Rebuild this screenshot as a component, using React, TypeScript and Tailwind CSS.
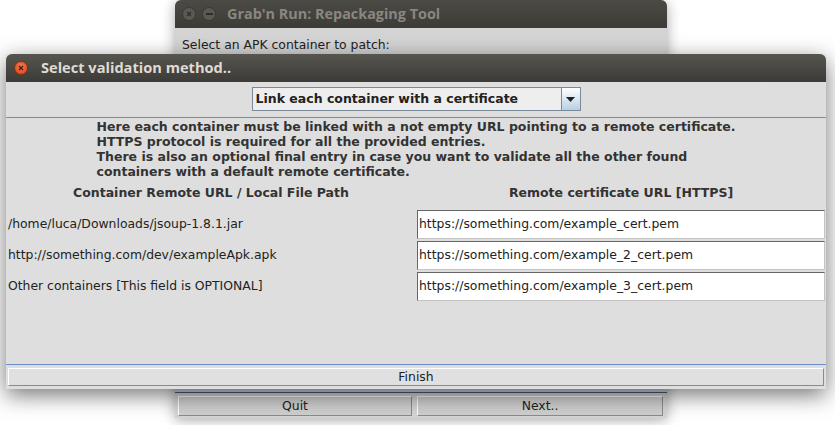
const FONT = "font-['DejaVu_Sans',sans-serif]";
const TITLE_FONT = "font-['Open_Sans','DejaVu_Sans',sans-serif]";

const ROWS = [
  { path: "/home/luca/Downloads/jsoup-1.8.1.jar", cert: "https://something.com/example_cert.pem" },
  { path: "http://something.com/dev/exampleApk.apk", cert: "https://something.com/example_2_cert.pem" },
  { path: "Other containers [This field is OPTIONAL]", cert: "https://something.com/example_3_cert.pem" },
];

function WinButton({ kind, active }: { kind: "close" | "min"; active?: boolean }) {
  const bg = active
    ? "bg-[radial-gradient(circle_at_50%_35%,#f47a52,#d8421a)] border-[#8e2e10]"
    : "bg-[#5a5954] border-[#3a3935]";
  return (
    <div className={`flex h-[14px] w-[14px] items-center justify-center rounded-full border ${bg}`}>
      {kind === "close" ? (
        <svg width="6" height="6" viewBox="0 0 6 6">
          <path d="M1 1L5 5M5 1L1 5" stroke={active ? "#4a1a08" : "#2e2d2a"} strokeWidth="1.2" />
        </svg>
      ) : (
        <div className="h-[2px] w-[7px] bg-[#2e2d2a]" />
      )}
    </div>
  );
}

function MetalButton({ label, className = "" }: { label: string; className?: string }) {
  return (
    <div
      className={`flex items-center justify-center border border-t-white border-l-white border-b-[#8a8a8a] border-r-[#8a8a8a] text-[12.4px] text-[#222] ${className}`}
    >
      {label}
    </div>
  );
}

export default function App() {
  return (
    <div className={`relative h-[425px] w-[835px] overflow-hidden bg-white ${FONT}`}>
      {/* back window */}
      <div className="absolute left-[175px] top-0 flex h-[418px] w-[492px] flex-col rounded-t-[6px] bg-[#d4d4d4] shadow-[0_2px_14px_rgba(0,0,0,0.35)]">
        <div className="flex h-[28px] shrink-0 items-center gap-[6px] rounded-t-[6px] bg-gradient-to-b from-[#4c4a45] to-[#3c3b37] pl-[7px]">
          <WinButton kind="close" />
          <WinButton kind="min" />
          <span className={`ml-[5px] text-[14.4px] font-bold text-[#8a8780] ${TITLE_FONT}`}>
            Grab'n Run: Repackaging Tool
          </span>
        </div>
        <div className="px-[7px] pt-[8px] text-[12.4px] text-[#222]">Select an APK container to patch:</div>
        <div className="flex-1" />
        <div className="h-px bg-[#4d5a80]" />
        <div className="flex gap-[5px] px-[3px] pb-[2px] pt-[3px]">
          <MetalButton label="Quit" className="h-[20px] w-[234px] bg-[#cfcfcf]" />
          <MetalButton label="Next.." className="h-[20px] w-[246px] bg-[#cfcfcf]" />
        </div>
      </div>

      {/* front dialog */}
      <div className="absolute left-[6px] top-[54px] flex h-[335px] w-[820px] flex-col rounded-t-[6px] bg-[#dedede] shadow-[0_6px_22px_rgba(0,0,0,0.55)]">
        <div className="flex h-[28px] shrink-0 items-center rounded-t-[6px] bg-gradient-to-b from-[#57554f] to-[#3c3b37] pl-[8px]">
          <WinButton kind="close" active />
          <span className={`ml-[13px] text-[14.6px] font-bold text-[#dfdbd2] ${TITLE_FONT}`}>
            Select validation method..
          </span>
        </div>

        <div className="flex justify-center pt-[5px]">
          <div className="flex h-[24px] w-[329px] border border-[#7a8a99] bg-[#eeeeee]">
            <div className="flex flex-1 items-center pl-[3px] text-[12.5px] font-bold text-[#222]">
              Link each container with a certificate
            </div>
            <div className="flex w-[19px] items-center justify-center border-l border-[#7a8a99] bg-gradient-to-b from-white to-[#b8cfe5]">
              <svg width="9" height="5" viewBox="0 0 9 5">
                <path d="M0 0H9L4.5 5Z" fill="#222" />
              </svg>
            </div>
          </div>
        </div>

        <div className="mt-[6px] h-px bg-[#6a8cc8]" />

        <div className="mx-auto mt-[1px] text-[12.5px] font-bold leading-[15px] text-[#333]">
          Here each container must be linked with a not empty URL pointing to a remote certificate.
          <br />
          HTTPS protocol is required for all the provided entries.
          <br />
          There is also an optional final entry in case you want to validate all the other found
          <br />
          containers with a default remote certificate.
        </div>

        <div className="mt-[5px] grid grid-cols-2 text-[12.5px] font-bold text-[#333]">
          <div className="text-center">Container Remote URL / Local File Path</div>
          <div className="text-center">Remote certificate URL [HTTPS]</div>
        </div>

        <div className="mt-[7px] flex flex-col gap-[2px] pl-[2px] pr-px">
          {ROWS.map((r) => (
            <div key={r.cert} className="flex h-[29px] items-center">
              <div className="w-[409px] text-[12.4px] text-[#222]">{r.path}</div>
              <div className="flex h-full flex-1 items-center border border-t-[#666] border-l-[#666] border-b-[#c4c4c4] border-r-[#c4c4c4] bg-white pl-[1px] text-[12.4px] text-[#222]">
                {r.cert}
              </div>
            </div>
          ))}
        </div>

        <div className="flex-1" />
        <div className="h-px bg-[#6a8cc8]" />
        <div className="px-[2px] pb-[3px] pt-[3px]">
          <div className="border border-t-white border-l-white border-b-[#8a8a8a] border-r-[#8a8a8a]">
            <div className="flex h-[16px] items-center justify-center bg-[#e0e0e0] text-[12.4px] text-[#222]">Finish</div>
          </div>
        </div>
      </div>
    </div>
  );
}
